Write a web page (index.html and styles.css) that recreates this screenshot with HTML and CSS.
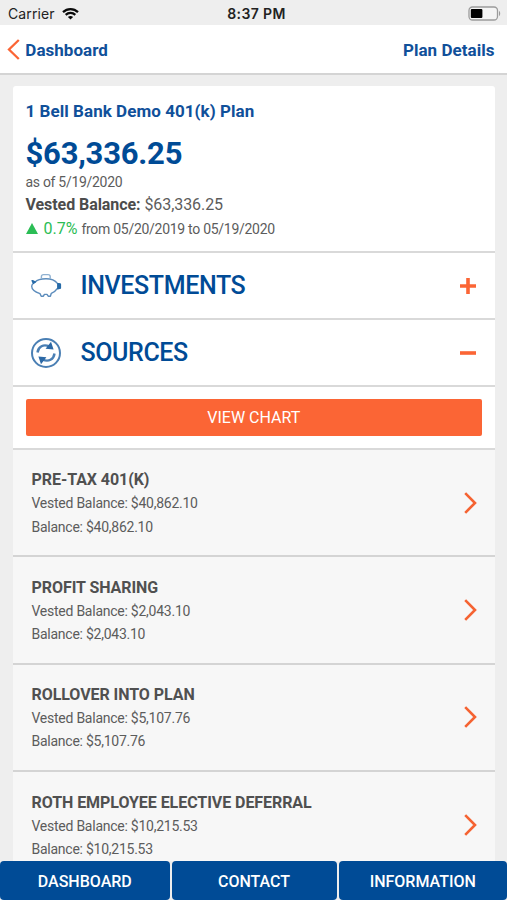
FILE: index.html
```html
<!DOCTYPE html>
<html lang="en">
<head>
    <meta charset="UTF-8">
    <meta name="viewport" content="width=device-width, initial-scale=1.0">
    <title>Plan Sources</title>
    <link rel="stylesheet" href="styles.css">
</head>
<body>

    <div class="status-bar">
        <div class="carrier">
            <span>Carrier</span>
            <svg width="17" height="13" viewBox="0 0 17 13" fill="none" stroke="#0a0a0a" stroke-width="2.2">
                <path d="M1 5.1C5.2 1 11.8 1 16 5.1"/>
                <path d="M3.7 7.9C6.4 5.3 10.6 5.3 13.3 7.9"/>
                <path d="M8.5 12.6L5.9 10C7.4 8.7 9.6 8.7 11.1 10Z" fill="#0a0a0a" stroke="none"/>
            </svg>
        </div>
        <div class="time">8:37 PM</div>
        <svg class="battery" width="33" height="15" viewBox="0 0 33 15">
            <rect x="1" y="1" width="28.5" height="13" rx="3.5" fill="#f4f4f4" stroke="#9b9b9b" stroke-width="1.3"/>
            <rect x="2.8" y="2.9" width="11.6" height="9.2" rx="1" fill="#000"/>
            <path d="M31 5v5c1.6-.6 1.6-4.4 0-5z" fill="#9b9b9b"/>
        </svg>
    </div>

    <header class="nav">
        <a class="back">
            <svg width="13" height="21" viewBox="0 0 13 21" fill="none" stroke="#fb6535" stroke-width="2.3">
                <path d="M11.8 1L2 10.5L11.8 20"/>
            </svg>
            <span>Dashboard</span>
        </a>
        <a class="details">Plan Details</a>
    </header>

    <main class="card">
        <section class="summary">
            <h1>1 Bell Bank Demo 401(k) Plan</h1>
            <div class="total">$63,336.25</div>
            <div class="as-of">as of 5/19/2020</div>
            <div class="vested"><b>Vested Balance:</b> $63,336.25</div>
            <div class="change">
                <svg width="12" height="11" viewBox="0 0 12 11"><path d="M6 0L12 11H0z" fill="#2bbd55"/></svg>
                <span class="percent">0.7%</span>
                <span class="range">from 05/20/2019 to 05/19/2020</span>
            </div>
        </section>

        <section class="accordion">
            <svg class="icon" width="32" height="32" viewBox="0 0 32 32" fill="none" stroke="#5c8cbc" stroke-width="1.4" stroke-linejoin="round">
                <path d="M5 12.2C7 10 11 8.8 16 8.8C21 8.8 25 10.2 27.4 13.4L29.9 14V18.2L27.2 18.7C26 20.8 23.8 22.2 21.3 23.3L20.4 26.2H18.2L17 24.4H14.4L13.4 26.2H11.2L10 23.6C5.4 22 1.7 19.4 1.7 16.2C1.7 14.8 2.4 14.2 3.5 13.2L2.3 10.8Z"/>
                <path d="M11.4 8.8V6.6C11.4 5.2 12.4 4.6 13.6 4.6H18C19.2 4.6 20.2 5.2 20.2 6.6V8.8" stroke="#8fb1d1"/>
                <path d="M27.8 13.8L30.4 14.2V18L27.8 18.5Z M2.2 10.7L5.2 11.9L3.6 13.3Z" fill="#276ba8" stroke="#276ba8"/>
            </svg>
            <h2>INVESTMENTS</h2>
            <svg width="16" height="16" viewBox="0 0 16 16" stroke="#fb6535" stroke-width="3.6"><path d="M0 8H16M8 0V16"/></svg>
        </section>

        <section class="accordion">
            <svg class="icon" width="32" height="32" viewBox="0 0 32 32" fill="none" stroke="#4a7fb4">
                <circle cx="16" cy="16" r="14" stroke-width="2"/>
                <path d="M7.5 15.5C8.2 9.5 13.6 6.8 19.2 9.4" stroke-width="2.4"/>
                <path d="M24.5 16.5C23.8 22.5 18.4 25.2 12.8 22.6" stroke-width="2.4"/>
                <path d="M21 4.8L23.6 12.6L15.6 11.7Z M11 27.2L8.4 19.4L16.4 20.3Z" fill="#2c69a6" stroke="none"/>
            </svg>
            <h2>SOURCES</h2>
            <svg width="16" height="16" viewBox="0 0 16 16" stroke="#fb6535" stroke-width="3.6"><path d="M0 8H16"/></svg>
        </section>

        <div class="chart-row">
            <button class="view-chart">VIEW CHART</button>
        </div>

        <section class="source">
            <div>
                <h3>PRE-TAX 401(K)</h3>
                <p>Vested Balance: $40,862.10</p>
                <p>Balance: $40,862.10</p>
            </div>
            <svg width="13" height="22" viewBox="0 0 13 22"><path d="M1.2 1.2L11 11L1.2 20.8"/></svg>
        </section>
        <section class="source">
            <div>
                <h3>PROFIT SHARING</h3>
                <p>Vested Balance: $2,043.10</p>
                <p>Balance: $2,043.10</p>
            </div>
            <svg width="13" height="22" viewBox="0 0 13 22"><path d="M1.2 1.2L11 11L1.2 20.8"/></svg>
        </section>
        <section class="source">
            <div>
                <h3>ROLLOVER INTO PLAN</h3>
                <p>Vested Balance: $5,107.76</p>
                <p>Balance: $5,107.76</p>
            </div>
            <svg width="13" height="22" viewBox="0 0 13 22"><path d="M1.2 1.2L11 11L1.2 20.8"/></svg>
        </section>
        <section class="source">
            <div>
                <h3>ROTH EMPLOYEE ELECTIVE DEFERRAL</h3>
                <p>Vested Balance: $10,215.53</p>
                <p>Balance: $10,215.53</p>
            </div>
            <svg width="13" height="22" viewBox="0 0 13 22"><path d="M1.2 1.2L11 11L1.2 20.8"/></svg>
        </section>
    </main>

    <nav class="tabs">
        <a>DASHBOARD</a>
        <a>CONTACT</a>
        <a>INFORMATION</a>
    </nav>

</body>
</html>
```
FILE: styles.css
```css
* {
    box-sizing: border-box;
}
body {
    margin: 0;
    height: 100vh;
    display: flex;
    flex-direction: column;
    overflow: hidden;
    font-family: Roboto, sans-serif;
    background-color: #eeeeee;
    color: #5c5c5c;
}
h1, h2, h3, p {
    margin: 0;
}
svg {
    flex: none;
    display: block;
}
.status-bar {
    height: 25px;
    flex: none;
    display: grid;
    grid-template-columns: 1fr auto 1fr;
    align-items: center;
    padding: 2px 5px 0 8px;
    font-family: Inter, sans-serif;
    font-size: 14px;
    color: #222;
}
.carrier {
    display: flex;
    align-items: center;
    gap: 7px;
    letter-spacing: 0.1px;
}
.time {
    padding-left: 3px;
    font-weight: 600;
    letter-spacing: 0.4px;
}
.battery {
    justify-self: end;
    margin-right: 1px;
}
.nav {
    height: 50px;
    flex: none;
    display: flex;
    justify-content: space-between;
    align-items: center;
    padding: 0 12.5px 0 7px;
    background: white;
    border-bottom: 2px solid #d4d4d4;
    color: #10509a;
    font-size: 17px;
    font-weight: bold;
    letter-spacing: 0.04px;
}
.back {
    display: flex;
    align-items: center;
    gap: 5.3px;
}
.back span, .details {
    padding-top: 2px;
}
.card {
    flex: 1;
    min-height: 0;
    overflow: hidden;
    margin: 11px 12.5px 0 13px;
    background: white;
    border-radius: 3px 3px 0 0;
}
.summary {
    height: 167px;
    padding: 14px 12.5px 0;
    border-bottom: 2px solid #d9d9d9;
}
.summary h1 {
    font-size: 17px;
    line-height: 22px;
    letter-spacing: 0.05px;
    color: #10509a;
}
.total {
    margin-top: 13px;
    font-size: 31px;
    line-height: 38px;
    letter-spacing: -0.22px;
    font-weight: bold;
    color: #004b96;
}
.as-of {
    font-size: 14px;
    line-height: 18px;
    letter-spacing: -0.3px;
}
.vested {
    margin-top: 2px;
    font-size: 16px;
    line-height: 24px;
    letter-spacing: -0.07px;
}
.vested b {
    color: #4c4c4c;
}
.change {
    display: flex;
    align-items: center;
    height: 23px;
    font-size: 14px;
    letter-spacing: -0.28px;
}
.percent {
    margin: 0 4px 0 6px;
    font-size: 16px;
    letter-spacing: 0;
    color: #2bbd55;
}
.accordion {
    height: 67px;
    display: flex;
    align-items: center;
    padding: 0 18.5px 0 17px;
    border-bottom: 2px solid #d9d9d9;
}
.accordion h2 {
    flex: 1;
    margin-left: 18.5px;
    font-size: 25px;
    font-weight: 500;
    letter-spacing: -0.38px;
    color: #004b96;
}
.chart-row {
    height: 63px;
    padding: 12px 12.5px 0;
    border-bottom: 2px solid #d9d9d9;
}
.view-chart {
    display: block;
    width: 100%;
    height: 37px;
    padding: 0;
    border: none;
    border-radius: 2px;
    background: #fb6535;
    color: white;
    font-family: inherit;
    font-size: 16px;
}
.source {
    height: 107.4px;
    display: flex;
    justify-content: space-between;
    align-items: center;
    padding: 0 18px 0 18.5px;
    background: #f7f7f7;
    border-bottom: 2px solid #d4d4d4;
}
.source div {
    padding-top: 2px;
}
.source h3 {
    font-size: 16px;
    line-height: 24px;
    letter-spacing: -0.06px;
    color: #505050;
}
.source p {
    font-size: 14px;
    line-height: 23.2px;
    letter-spacing: -0.25px;
}
.source svg {
    fill: none;
    stroke: #f56332;
    stroke-width: 2.6;
}
.tabs {
    height: 39px;
    flex: none;
    display: grid;
    grid-template-columns: 169.5px 1fr 168.5px;
    gap: 2px;
}
.tabs a {
    display: flex;
    justify-content: center;
    align-items: center;
    padding-top: 2px;
    background: #004b96;
    border-radius: 4px;
    color: white;
    font-size: 16px;
    font-weight: 500;
}
```
